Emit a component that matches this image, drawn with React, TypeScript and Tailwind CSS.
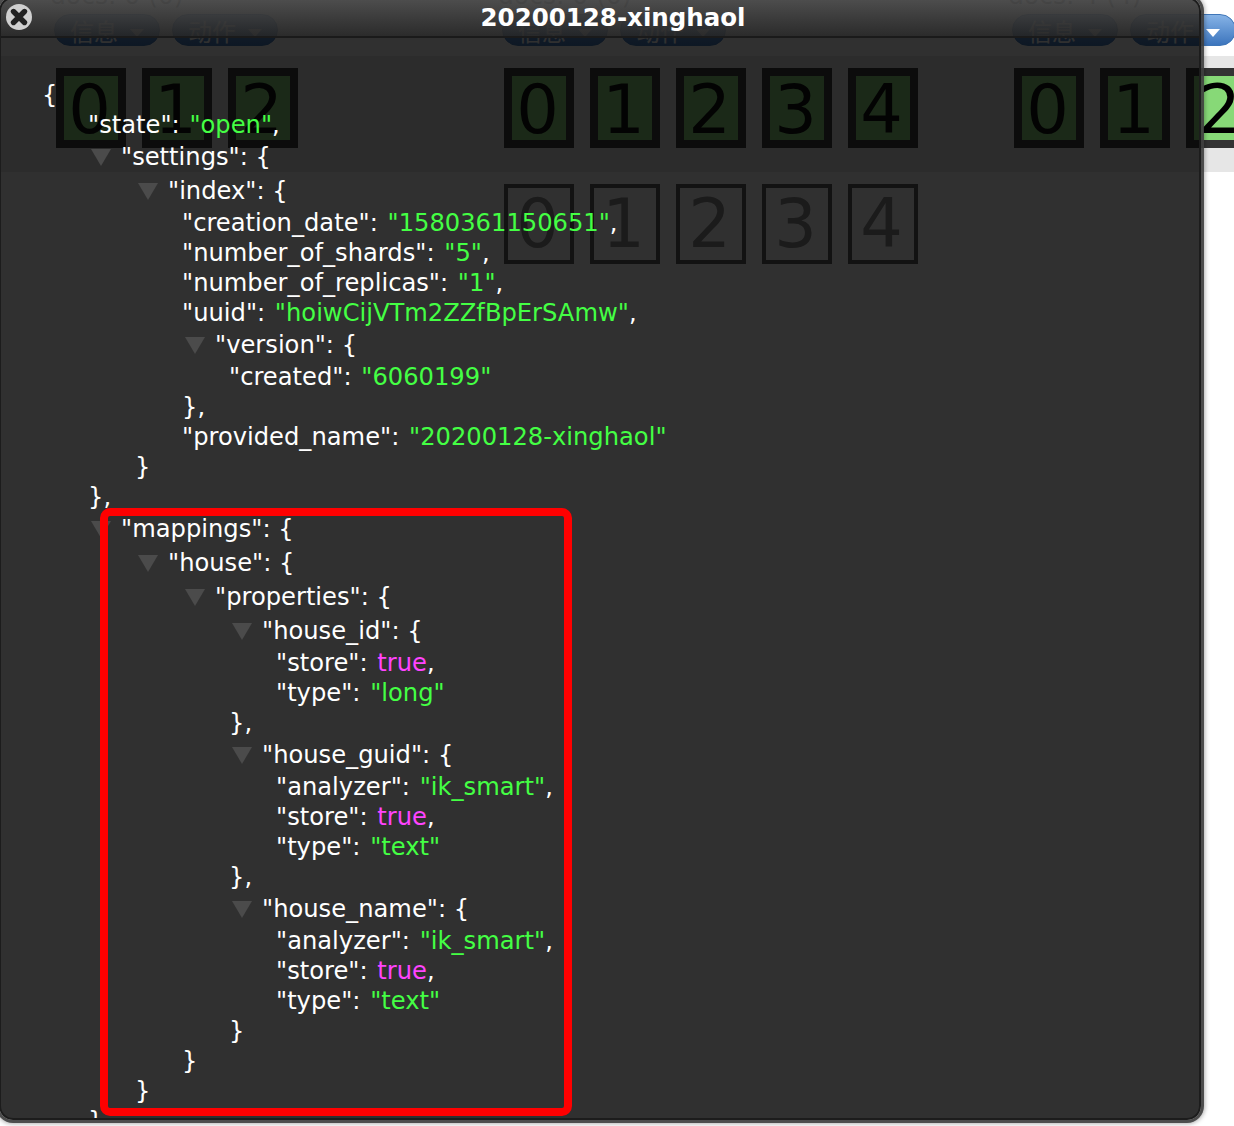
import React from "react";

const FONT = "font-['DejaVu_Sans',sans-serif]";

type V = string | boolean | { [k: string]: V };

const data: { [k: string]: V } = {
  state: "open",
  settings: {
    index: {
      creation_date: "1580361150651",
      number_of_shards: "5",
      number_of_replicas: "1",
      uuid: "hoiwCijVTm2ZZfBpErSAmw",
      version: { created: "6060199" },
      provided_name: "20200128-xinghaol",
    },
  },
  mappings: {
    house: {
      properties: {
        house_id: { store: true, type: "long" },
        house_guid: { analyzer: "ik_smart", store: true, type: "text" },
        house_name: { analyzer: "ik_smart", store: true, type: "text" },
      },
    },
  },
  aliases: {},
};

function Entry({ k, v, last }: { k: string; v: V; last: boolean }) {
  if (typeof v === "object") {
    return (
      <div>
        <div className="flex h-[34px] items-center">
          <span className="w-[33px] shrink-0 pl-[3px]">
            <span className="block h-0 w-0 border-x-[10px] border-t-[17px] border-x-transparent border-t-[#4b4b4b]" />
          </span>
          <span>"{k}": {"{"}</span>
        </div>
        <div className="pl-[47px]">
          {Object.entries(v).map(([a, b], i, all) => (
            <Entry key={a} k={a} v={b} last={i === all.length - 1} />
          ))}
        </div>
        <div className="h-[30px]">{"}"}{last ? "" : ","}</div>
      </div>
    );
  }
  return (
    <div className="h-[30px]">
      "{k}":{" "}
      {typeof v === "boolean" ? (
        <span className="ml-[2px] text-[#ff44ff]">{String(v)}</span>
      ) : (
        <span className="ml-[2px] text-[#44ff44]">"{v}"</span>
      )}
      {last ? "" : ","}
    </div>
  );
}

function Btn({ label }: { label: string }) {
  return (
    <div className="flex h-8 w-[106px] shrink-0 items-center justify-center gap-3 rounded-[16px] border border-[#3f76b8] bg-gradient-to-b from-[#86b3e6] to-[#3c75bd] pt-[6px] font-['DejaVu_Sans','Noto_Sans_CJK_SC',sans-serif] text-[24px] leading-none text-white">
      <span>{label}</span>
      <span className="block h-0 w-0 border-x-[7px] border-t-[8px] border-x-transparent border-t-white" />
    </div>
  );
}

function Box({ n, on }: { n: number; on?: boolean }) {
  return (
    <div
      className={
        on
          ? "flex h-20 w-[70px] shrink-0 items-center justify-center border-8 border-[#333333] bg-[#87d977] pr-[3px] pt-1 text-[67px] leading-none text-black"
          : "flex h-20 w-[70px] shrink-0 items-center justify-center border-4 border-[#555555] pr-[3px] text-[67px] leading-none text-[#888888]"
      }
    >
      {n}
    </div>
  );
}

export default function App() {
  const cols = [
    { id: "a", title: "docs: 0 (0)", top: 3, bottom: 0 },
    { id: "b", title: "docs: 0 (0)", top: 5, bottom: 5 },
    { id: "c", title: "docs: 4 (4)", top: 3, bottom: 0 },
  ];
  return (
    <div className={`relative h-[1126px] w-[1234px] overflow-hidden bg-white ${FONT}`}>
      <div className="flex h-[56px] flex-col">
        <div className="grid grid-cols-[448px_510px_276px] pl-[54px]">
          {cols.map((c) => (
            <div key={c.id} className="flex flex-col">
              <div className="-ml-1 flex h-[14px] items-end overflow-hidden">
                <span className="text-[25px] leading-[36px] text-[#555555]">{c.title}</span>
              </div>
              <div className="flex gap-3">
                <Btn label="信息" />
                <Btn label="动作" />
              </div>
            </div>
          ))}
        </div>
      </div>
      <div className="grid h-[116px] grid-cols-[448px_510px_276px] bg-[#e6e6e6] pl-[56px] pt-3">
        {cols.map((c) => (
          <div key={c.id} className="flex gap-4">
            {Array.from({ length: c.top }, (_, i) => (
              <Box key={i} n={i} on />
            ))}
          </div>
        ))}
      </div>
      <div className="grid grid-cols-[448px_510px_276px] pl-[56px] pt-3">
        {cols.map((c) => (
          <div key={c.id} className="flex gap-4">
            {Array.from({ length: c.bottom }, (_, i) => (
              <Box key={i} n={i} />
            ))}
          </div>
        ))}
      </div>

      {/* dialog */}
      <div className="absolute left-[-1px] top-[-3px] flex h-[1123px] w-[1202px] flex-col overflow-hidden rounded-[14px] border-2 border-[#1c1c1c] bg-[rgba(4,4,4,0.824)] shadow-[0_0_0_3px_rgba(64,64,64,0.9),0_0_4px_4px_rgba(0,0,0,0.3)]">
        <div className="relative flex h-[39px] shrink-0 items-center justify-center border-b-2 border-[#1a1a1a] bg-gradient-to-b from-[rgba(85,85,85,0.8)] to-[rgba(42,42,42,0.75)] pt-[2px]">
          <span className="ml-[26px] text-[24.5px] font-bold leading-none text-white">20200128-xinghaol</span>
          <span className="absolute left-[5px] top-[5px] flex h-[26px] w-[26px] items-center justify-center rounded-full bg-[#d0d0d0]">
            <svg width="20" height="20" viewBox="0 0 20 20">
              <path d="M4.5 4.5 L15.5 15.5 M15.5 4.5 L4.5 15.5" stroke="#222222" strokeWidth="5.4" strokeLinecap="round" />
            </svg>
          </span>
        </div>
        <div className="min-h-0 flex-1 overflow-hidden pl-[41px] pt-[42px] text-[24.2px] leading-[30px] text-white">
          <div className="h-[30px]">{"{"}</div>
          <div className="pl-[46px]">
            {Object.entries(data).map(([a, b], i, all) => (
              <Entry key={a} k={a} v={b} last={i === all.length - 1} />
            ))}
          </div>
        </div>
      </div>

      {/* red annotation */}
      <div className="absolute left-[100px] top-[508px] h-[608px] w-[472px] rounded-[10px] border-8 border-[#ff0000]" />
    </div>
  );
}
